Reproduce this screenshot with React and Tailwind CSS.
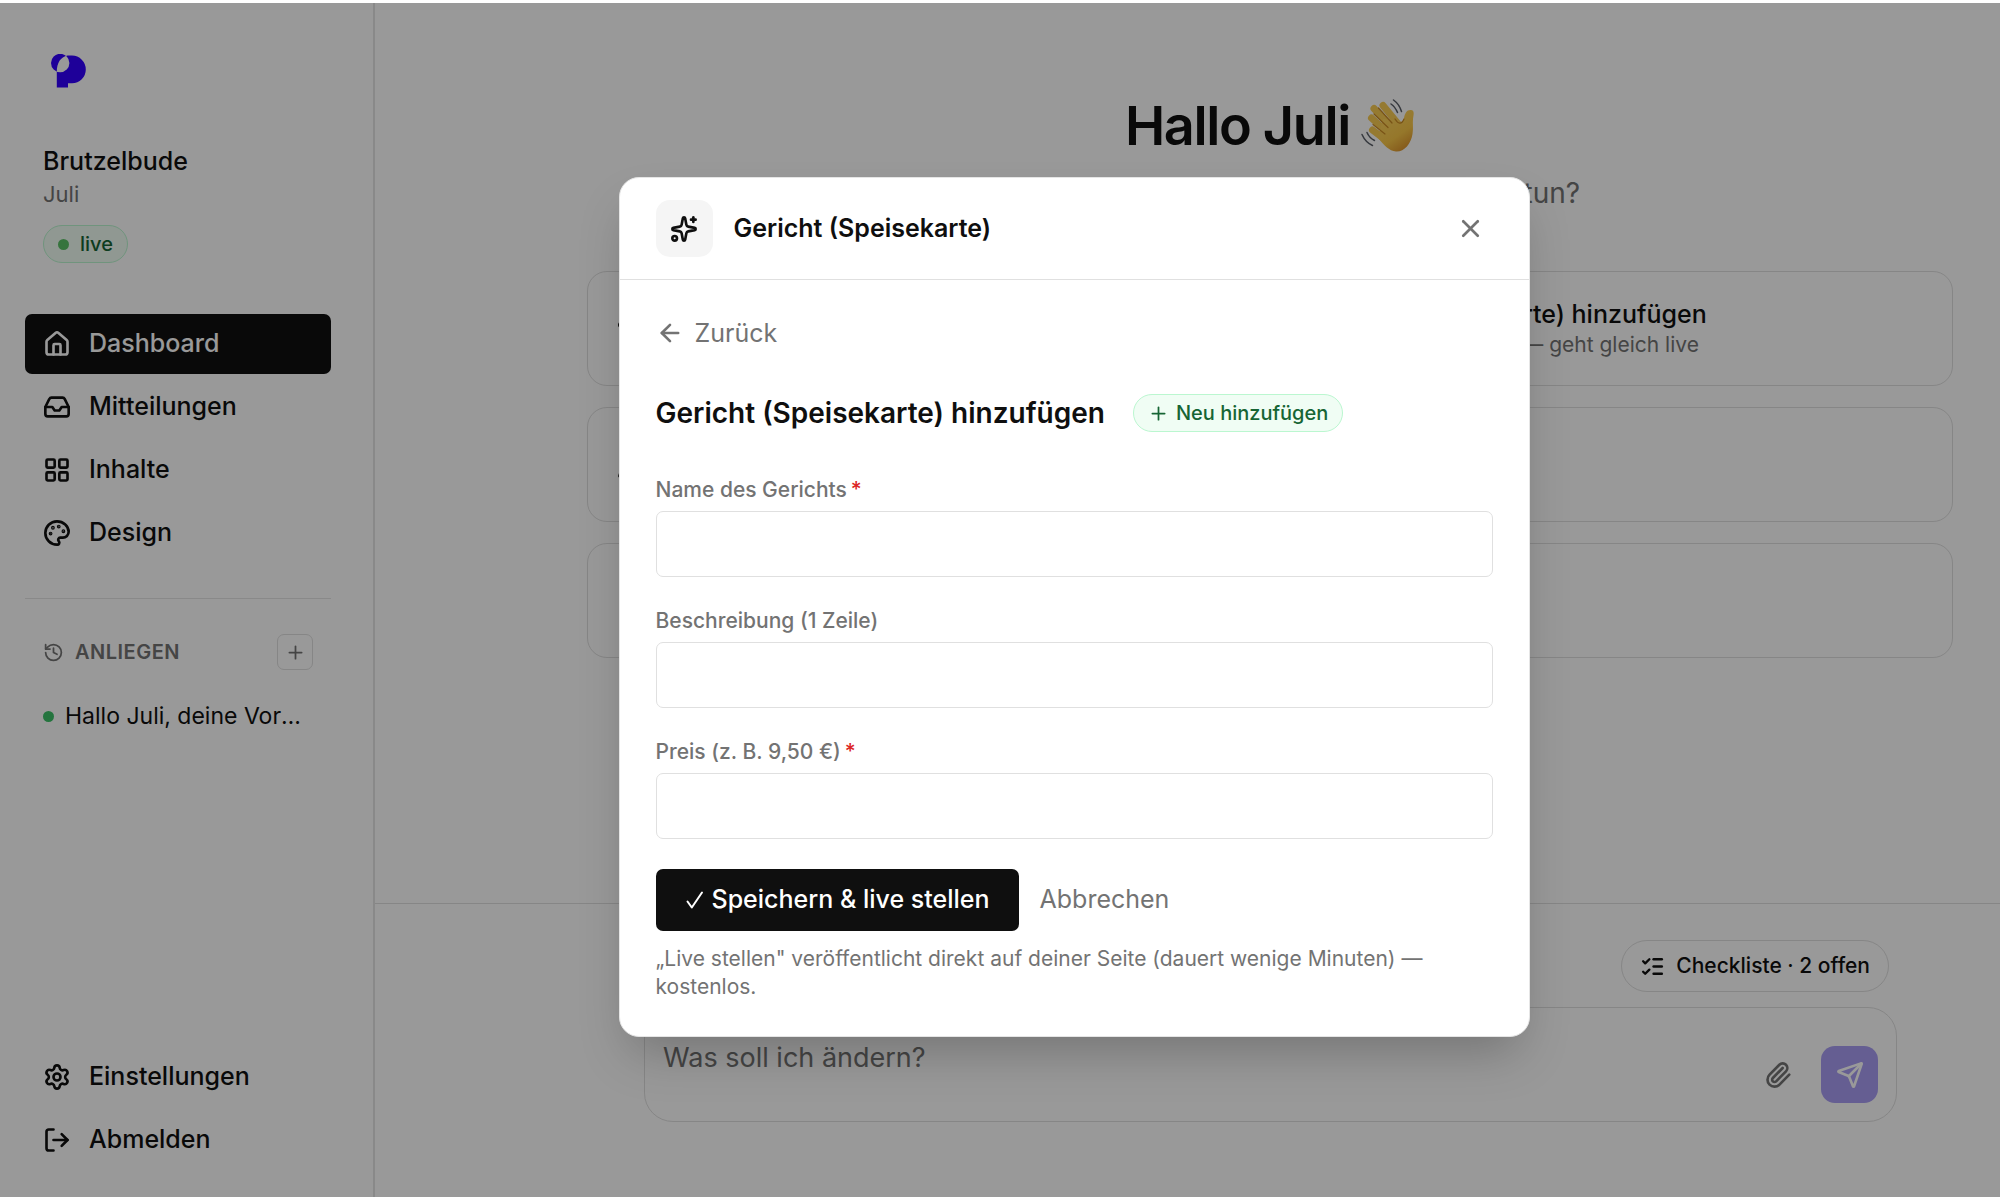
import {
  ArrowLeft,
  History,
  House,
  Inbox,
  LayoutGrid,
  ListChecks,
  LogOut,
  Palette,
  Paperclip,
  Pencil,
  Plus,
  Send,
  Settings,
  Sparkles,
  Store,
  X,
} from 'lucide-react'

const navItems = [
  { label: 'Dashboard', icon: House, active: true },
  { label: 'Mitteilungen', icon: Inbox },
  { label: 'Inhalte', icon: LayoutGrid },
  { label: 'Design', icon: Palette },
]

const accountItems = [
  { label: 'Einstellungen', icon: Settings },
  { label: 'Abmelden', icon: LogOut },
]

const quickActions = [
  { title: 'Betrieb bearbeiten', text: 'Name und Adresse', icon: Store },
  { title: 'Gericht (Speisekarte) hinzufügen', text: 'Name, Bild und Preis — geht gleich live' },
  { title: 'Text ändern', text: 'Auf deiner Seite', icon: Pencil },
  { title: 'Bild ändern', text: 'Foto tauschen' },
  { title: 'Frage stellen', text: 'Direkt im Chat', icon: Plus },
  { title: 'Mehr', text: 'Alle Aktionen' },
]

const fields = [
  { id: 'name', label: 'Name des Gerichts', required: true },
  { id: 'beschreibung', label: 'Beschreibung (1 Zeile)' },
  { id: 'preis', label: 'Preis (z. B. 9,50 €)', required: true },
]

function Logo() {
  return (
    <svg viewBox="51 54 36 34" className="h-[34px] w-9" fill="#3300ff" aria-label="Logo">
      <path
        fillRule="evenodd"
        d="M51 63a9.2 9.2 0 1 0 18.4 0a9.2 9.2 0 1 0-18.4 0ZM56.8 87.6V72C56.8 63 60.5 57 67.6 55.6H72A13.8 13.8 0 0 1 72 83.2H68V87.6Z"
      />
    </svg>
  )
}

function WavingHand() {
  return (
    <svg viewBox="0 0 54 54" className="size-[54px]" fill="none" strokeLinecap="round" aria-label="Winkende Hand">
      <defs>
        <linearGradient id="skin" x1="0" y1="0" x2="0.6" y2="1">
          <stop offset="0" stopColor="#ffd765" />
          <stop offset="0.7" stopColor="#f9c748" />
          <stop offset="1" stopColor="#e09a30" />
        </linearGradient>
      </defs>
      <g stroke="#f9cb52" strokeWidth="7">
        <path d="M22 6.500L38 26" />
        <path d="M13 9.500L32 30" />
        <path d="M10.500 19L28 35" />
        <path d="M11.500 31L26 42" />
      </g>
      <path
        d="M22 20L35 21C38 25 41.500 24 43 19C44 14 46 10.500 50 11C54 11.500 52.500 16 52 20C51.500 25 52.500 29 51.500 35C50 45 43 53 35 52.500C28 52 23 46 17 39Z"
        fill="url(#skin)"
      />
      <g stroke="#c98a25" strokeWidth="1.200">
        <path d="M17.500 9L31 24" />
        <path d="M13 15L27 28.500" />
        <path d="M12 25.500L24 35" />
        <path d="M34 20C37 25 40.500 26 43 20" />
      </g>
      <g stroke="#5a5f68" strokeWidth="1.500">
        <path d="M32.500 1C36 3.500 39 7.500 40.500 12.500" />
        <path d="M30 5C33 7 35 10 36.500 13.500" />
        <path d="M1 35.500C3 40 7 44.500 11.500 46.500" />
        <path d="M6 33.500C7.500 37 10.500 40 13.500 41.500" />
      </g>
    </svg>
  )
}

function NavItem({ label, icon: Icon, active }) {
  return (
    <a
      href="#"
      className={`flex h-[60px] items-center gap-[18px] rounded-[7px] px-[18px] text-[25px] font-medium ${
        active ? 'bg-[#0f0f0f] text-white' : 'text-[#0f0f0f]'
      }`}
    >
      <Icon className="size-7" strokeWidth={2.25} />
      {label}
    </a>
  )
}

function Sidebar() {
  return (
    <aside className="flex w-[375px] shrink-0 flex-col border-r-2 border-[#e5e5e5] pt-[51px] pr-[42px] pb-[27px] pl-[25px]">
      <div className="px-[18px]">
        <div className="pl-2">
          <Logo />
        </div>
        <p className="mt-[55px] text-[25px] leading-9 font-medium">Brutzelbude</p>
        <p className="text-[22px] leading-[30px] text-[#737373]">Juli</p>
        <span className="mt-4 inline-flex h-[38px] items-center gap-[11px] rounded-full border border-[#bbf7d0] bg-[#f0fdf4] px-[14px] text-[20px] font-medium text-[#166534]">
          <span className="size-[11px] rounded-full bg-[#5bc267]" />
          live
        </span>
      </div>

      <nav className="mt-[51px] flex flex-col gap-[3px]">
        {navItems.map((item) => (
          <NavItem key={item.label} {...item} />
        ))}
      </nav>

      <div className="mt-[35px] border-t border-[#e5e5e5] px-[18px] pt-[35px]">
        <div className="flex items-center justify-between">
          <h2 className="flex items-center gap-[11px] text-[20px] font-semibold tracking-wide text-[#737373]">
            <History className="size-[21px]" />
            ANLIEGEN
          </h2>
          <button
            type="button"
            aria-label="Neues Anliegen"
            className="flex size-9 items-center justify-center rounded-[7px] border border-[#e0e0e0] text-[#737373]"
          >
            <Plus className="size-[21px]" />
          </button>
        </div>
        <a href="#" className="mt-7 flex items-center gap-[11px] text-[23px] leading-9">
          <span className="size-[11px] shrink-0 rounded-full bg-[#3cc268]" />
          <span className="truncate">Hallo Juli, deine Vorschau ist fertig</span>
        </a>
      </div>

      <div className="mt-auto flex flex-col gap-[3px]">
        {accountItems.map((item) => (
          <NavItem key={item.label} {...item} />
        ))}
      </div>
    </aside>
  )
}

function Dashboard() {
  return (
    <main className="flex min-w-0 flex-1 flex-col">
      <div className="pt-[91px] pr-[47px] pl-[212px]">
        <h1 className="flex items-center justify-center gap-[11px] text-[54px] leading-[64px] font-semibold tracking-tight">
          Hallo Juli
          <WavingHand />
        </h1>
        <p className="mt-[17px] text-center text-[28px] leading-9 text-[#737373]">
          Schön, dass du da bist – was möchtest du tun?
        </p>
        <div className="mt-[60px] grid grid-cols-2 gap-[21px]">
          {quickActions.map(({ title, text, icon: Icon }) => (
            <button
              key={title}
              type="button"
              className="flex h-[115px] items-center gap-[18px] rounded-[20px] border border-[#e0e0e0] px-[29px] text-left"
            >
              {Icon && <Icon className="size-7" />}
              <span>
                <span className="block text-[25px] leading-8 font-medium">{title}</span>
                <span className="block text-[21px] leading-[30px] text-[#737373]">{text}</span>
              </span>
            </button>
          ))}
        </div>
      </div>

      <div className="mt-auto border-t border-[#e0e0e0] pt-9 pr-[103px] pb-[75px] pl-[269px]">
        <div className="flex justify-end pr-2">
          <button
            type="button"
            className="flex h-[52px] items-center gap-[11px] rounded-full border border-[#e0e0e0] px-[18px] text-[21px] font-medium"
          >
            <ListChecks className="size-[25px]" strokeWidth={2.25} />
            Checkliste · 2 offen
          </button>
        </div>
        <div className="mt-[15px] flex h-[115px] items-end gap-[29px] rounded-[29px] border border-[#e0e0e0] p-[18px]">
          <textarea
            aria-label="Nachricht"
            placeholder="Was soll ich ändern?"
            className="h-full flex-1 resize-none pt-3 text-[27px] leading-10 placeholder:text-[#737373]"
          />
          <button type="button" aria-label="Datei anhängen" className="flex h-[57px] items-center text-[#737373]">
            <Paperclip className="size-7" strokeWidth={2.25} />
          </button>
          <button
            type="button"
            aria-label="Senden"
            className="flex size-[57px] items-center justify-center rounded-[14px] bg-[#a89df3] text-white"
          >
            <Send className="size-7" strokeWidth={2.25} />
          </button>
        </div>
      </div>
    </main>
  )
}

function DishDialog() {
  return (
    <div
      role="dialog"
      aria-labelledby="dialog-title"
      className="w-[911px] overflow-hidden rounded-[20px] border border-[#e5e5e5] bg-white shadow-2xl"
    >
      <div className="flex items-center gap-[21px] border-b border-[#e0e0e0] px-9 py-[22px]">
        <span className="flex size-[57px] items-center justify-center rounded-[14px] bg-[#f5f5f5]">
          <Sparkles className="size-7" strokeWidth={2.25} />
        </span>
        <h2 id="dialog-title" className="flex-1 text-[25px] font-semibold">
          Gericht (Speisekarte)
        </h2>
        <button type="button" aria-label="Schließen" className="p-2 text-[#737373]">
          <X className="size-[29px]" strokeWidth={2.25} />
        </button>
      </div>

      <div className="px-9 py-[35px]">
        <button type="button" className="flex items-center gap-[11px] text-[25px] leading-9 text-[#737373]">
          <ArrowLeft className="size-7" strokeWidth={2.25} />
          Zurück
        </button>

        <div className="mt-[42px] flex items-center gap-7">
          <h3 className="text-[28px] leading-10 font-semibold">Gericht (Speisekarte) hinzufügen</h3>
          <span className="flex h-[38px] items-center gap-[7px] rounded-full border border-[#bbf7d0] bg-[#f0fdf4] px-[14px] text-[20px] font-medium text-[#166534]">
            <Plus className="size-[21px]" />
            Neu hinzufügen
          </span>
        </div>

        <form className="mt-[43px]">
          <div className="flex flex-col gap-[30px]">
            {fields.map((field) => (
              <div key={field.id}>
                <label htmlFor={field.id} className="block text-[21px] leading-7 font-medium text-[#737373]">
                  {field.label}
                  {field.required && <span className="ml-1 text-[#dc2626]">*</span>}
                </label>
                <input
                  id={field.id}
                  type="text"
                  className="mt-[7px] block h-[66px] w-full rounded-[7px] border border-[#e0e0e0] bg-white px-[18px] text-[25px]"
                />
              </div>
            ))}
          </div>
          <div className="mt-[30px] flex items-center gap-[21px] text-[25px]">
            <button
              type="submit"
              className="flex h-[62px] items-center gap-2 rounded-[7px] bg-[#0f0f0f] px-[29px] font-medium text-white"
            >
              <svg viewBox="0 0 19 19" className="size-[19px]" fill="none" stroke="currentColor" aria-hidden="true">
                <path d="M2.500 10.500L6.800 16.500L17 1.500" strokeWidth="2" strokeLinecap="round" strokeLinejoin="round" />
              </svg>
              Speichern &amp; live stellen
            </button>
            <button type="button" className="text-[#737373]">
              Abbrechen
            </button>
          </div>
          <p className="mt-[14px] text-[21px] leading-7 text-[#737373]">
            „Live stellen" veröffentlicht direkt auf deiner Seite (dauert wenige Minuten) — kostenlos.
          </p>
        </form>
      </div>
    </div>
  )
}

export default function App() {
  return (
    <div className="flex min-h-screen flex-col bg-white pt-[3px] font-['Inter',sans-serif] text-[#0f0f0f]">
      <div className="relative flex flex-1">
        <Sidebar />
        <Dashboard />
        <div className="absolute inset-0 flex items-start justify-center bg-black/40 pt-[174px] pl-[148px]">
          <DishDialog />
        </div>
      </div>
    </div>
  )
}
